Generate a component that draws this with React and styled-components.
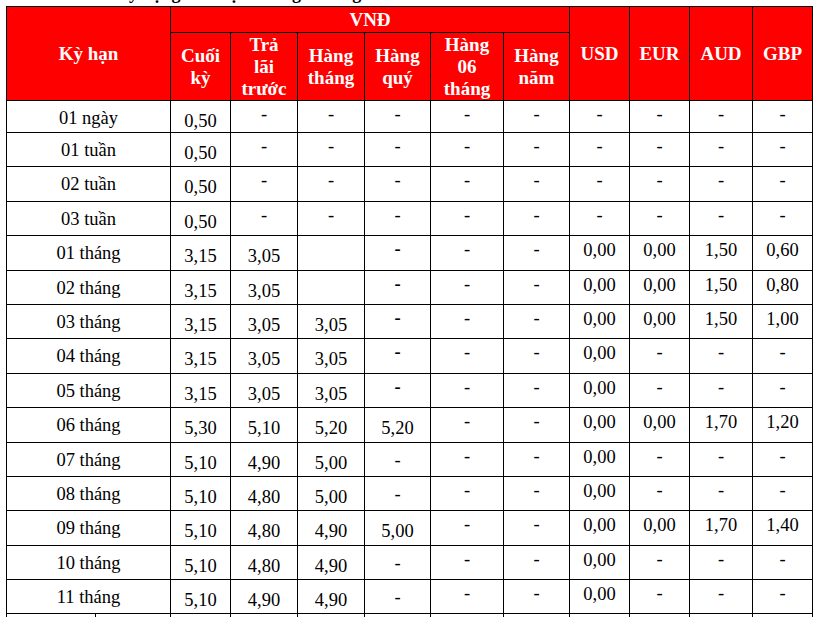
import React from "react";
import styled, { createGlobalStyle } from "styled-components";

const SERIF = `"Liberation Serif", "Times New Roman", serif`;

const GlobalStyle = createGlobalStyle`
  html, body { margin: 0; padding: 0; background: #fff; }
  body { overflow: hidden; font-family: ${SERIF}; }
`;

const Page = styled.div`
  width: 820px;
  height: 617px;
  overflow: hidden;
  padding-left: 6px;
  box-sizing: border-box;
`;

const TitleClip = styled.div`
  height: 6px;
  overflow: hidden;
  display: flex;
  align-items: flex-end;
`;

const Title = styled.div`
  font-family: ${SERIF};
  font-weight: 700;
  font-size: 18px;
  line-height: 20px;
  color: #000;
  margin-bottom: 3px;
  padding-left: 36px;
  white-space: nowrap;
`;

const Grid = styled.div`
  display: grid;
  grid-template-columns: 88px 74px 59px 66px 66px 65px 72px 65px 59px 59px 62px 59px;
  grid-template-rows: 25px 67px 31px repeat(14, 33.4px) 40px;
  gap: 1px;
  background: #000;
  border: 1px solid #000;
  width: max-content;
`;

const HeadCell = styled.div`
  grid-column: span ${(p) => p.$cols || 1};
  grid-row: span ${(p) => p.$rows || 1};
  background: #ff0000;
  color: #fff;
  font-family: ${SERIF};
  font-weight: 700;
  font-size: 19px;
  line-height: 22px;
  display: flex;
  align-items: center;
  justify-content: center;
  text-align: center;
`;

const pads = { label: 7, low: 10, lowdash: 7, mid: 4, dash: 3 };

const Cell = styled.div`
  grid-column: span ${(p) => p.$cols || 1};
  background: #fff;
  color: #000;
  font-family: ${SERIF};
  font-size: 18.5px;
  line-height: 20px;
  font-weight: ${(p) => (p.$bold ? 700 : 400)};
  text-align: center;
  padding-top: ${(p) => pads[p.$v] || 0}px;
  box-sizing: border-box;
  white-space: nowrap;
`;

const L = (t) => [t, "low", false];
const M = (t) => [t, "mid", false];
const B = ["-", "dash", true];
const E = ["", "mid", false];
const D = ["-", "dash", false];
const LD = ["-", "lowdash", false];

const rows = [
  ["01 ngày", [L("0,50"), D, D, D, D, D, D, D, D, D]],
  ["01 tuần", [L("0,50"), D, D, D, D, D, D, D, D, D]],
  ["02 tuần", [L("0,50"), D, D, D, D, D, D, D, D, D]],
  ["03 tuần", [L("0,50"), D, D, D, D, D, D, D, D, D]],
  ["01 tháng", [L("3,15"), L("3,05"), E, B, D, D, M("0,00"), M("0,00"), M("1,50"), M("0,60")]],
  ["02 tháng", [L("3,15"), L("3,05"), E, B, D, D, M("0,00"), M("0,00"), M("1,50"), M("0,80")]],
  ["03 tháng", [L("3,15"), L("3,05"), L("3,05"), B, D, D, M("0,00"), M("0,00"), M("1,50"), M("1,00")]],
  ["04 tháng", [L("3,15"), L("3,05"), L("3,05"), B, D, D, M("0,00"), D, D, D]],
  ["05 tháng", [L("3,15"), L("3,05"), L("3,05"), B, D, D, M("0,00"), D, D, D]],
  ["06 tháng", [L("5,30"), L("5,10"), L("5,20"), L("5,20"), D, D, M("0,00"), M("0,00"), M("1,70"), M("1,20")]],
  ["07 tháng", [L("5,10"), L("4,90"), L("5,00"), LD, D, D, M("0,00"), D, D, D]],
  ["08 tháng", [L("5,10"), L("4,80"), L("5,00"), LD, D, D, M("0,00"), D, D, D]],
  ["09 tháng", [L("5,10"), L("4,80"), L("4,90"), L("5,00"), D, D, M("0,00"), M("0,00"), M("1,70"), M("1,40")]],
  ["10 tháng", [L("5,10"), L("4,80"), L("4,90"), LD, D, D, M("0,00"), D, D, D]],
  ["11 tháng", [L("5,10"), L("4,90"), L("4,90"), LD, D, D, M("0,00"), D, D, D]],
];

export default function App() {
  return (
    <Page>
      <GlobalStyle />
      <TitleClip>
        <Title>Lãi suất huy động tiết kiệm thông thường</Title>
      </TitleClip>
      <Grid>
        <HeadCell $cols={2} $rows={2}>Kỳ hạn</HeadCell>
        <HeadCell $cols={6}>VNĐ</HeadCell>
        <HeadCell $rows={2}>USD</HeadCell>
        <HeadCell $rows={2}>EUR</HeadCell>
        <HeadCell $rows={2}>AUD</HeadCell>
        <HeadCell $rows={2}>GBP</HeadCell>
        <HeadCell>Cuối<br />kỳ</HeadCell>
        <HeadCell>Trả<br />lãi<br />trước</HeadCell>
        <HeadCell>Hàng<br />tháng</HeadCell>
        <HeadCell>Hàng<br />quý</HeadCell>
        <HeadCell>Hàng<br />06<br />tháng</HeadCell>
        <HeadCell>Hàng<br />năm</HeadCell>
        {rows.map(([label, cells]) => (
          <React.Fragment key={label}>
            <Cell $cols={2} $v="label">{label}</Cell>
            {cells.map(([t, v, b], i) => (
              <Cell key={i} $v={v} $bold={b}>{t}</Cell>
            ))}
          </React.Fragment>
        ))}
        {Array.from({ length: 12 }).map((_, i) => (
          <Cell key={"x" + i} $v="mid" />
        ))}
      </Grid>
    </Page>
  );
}
